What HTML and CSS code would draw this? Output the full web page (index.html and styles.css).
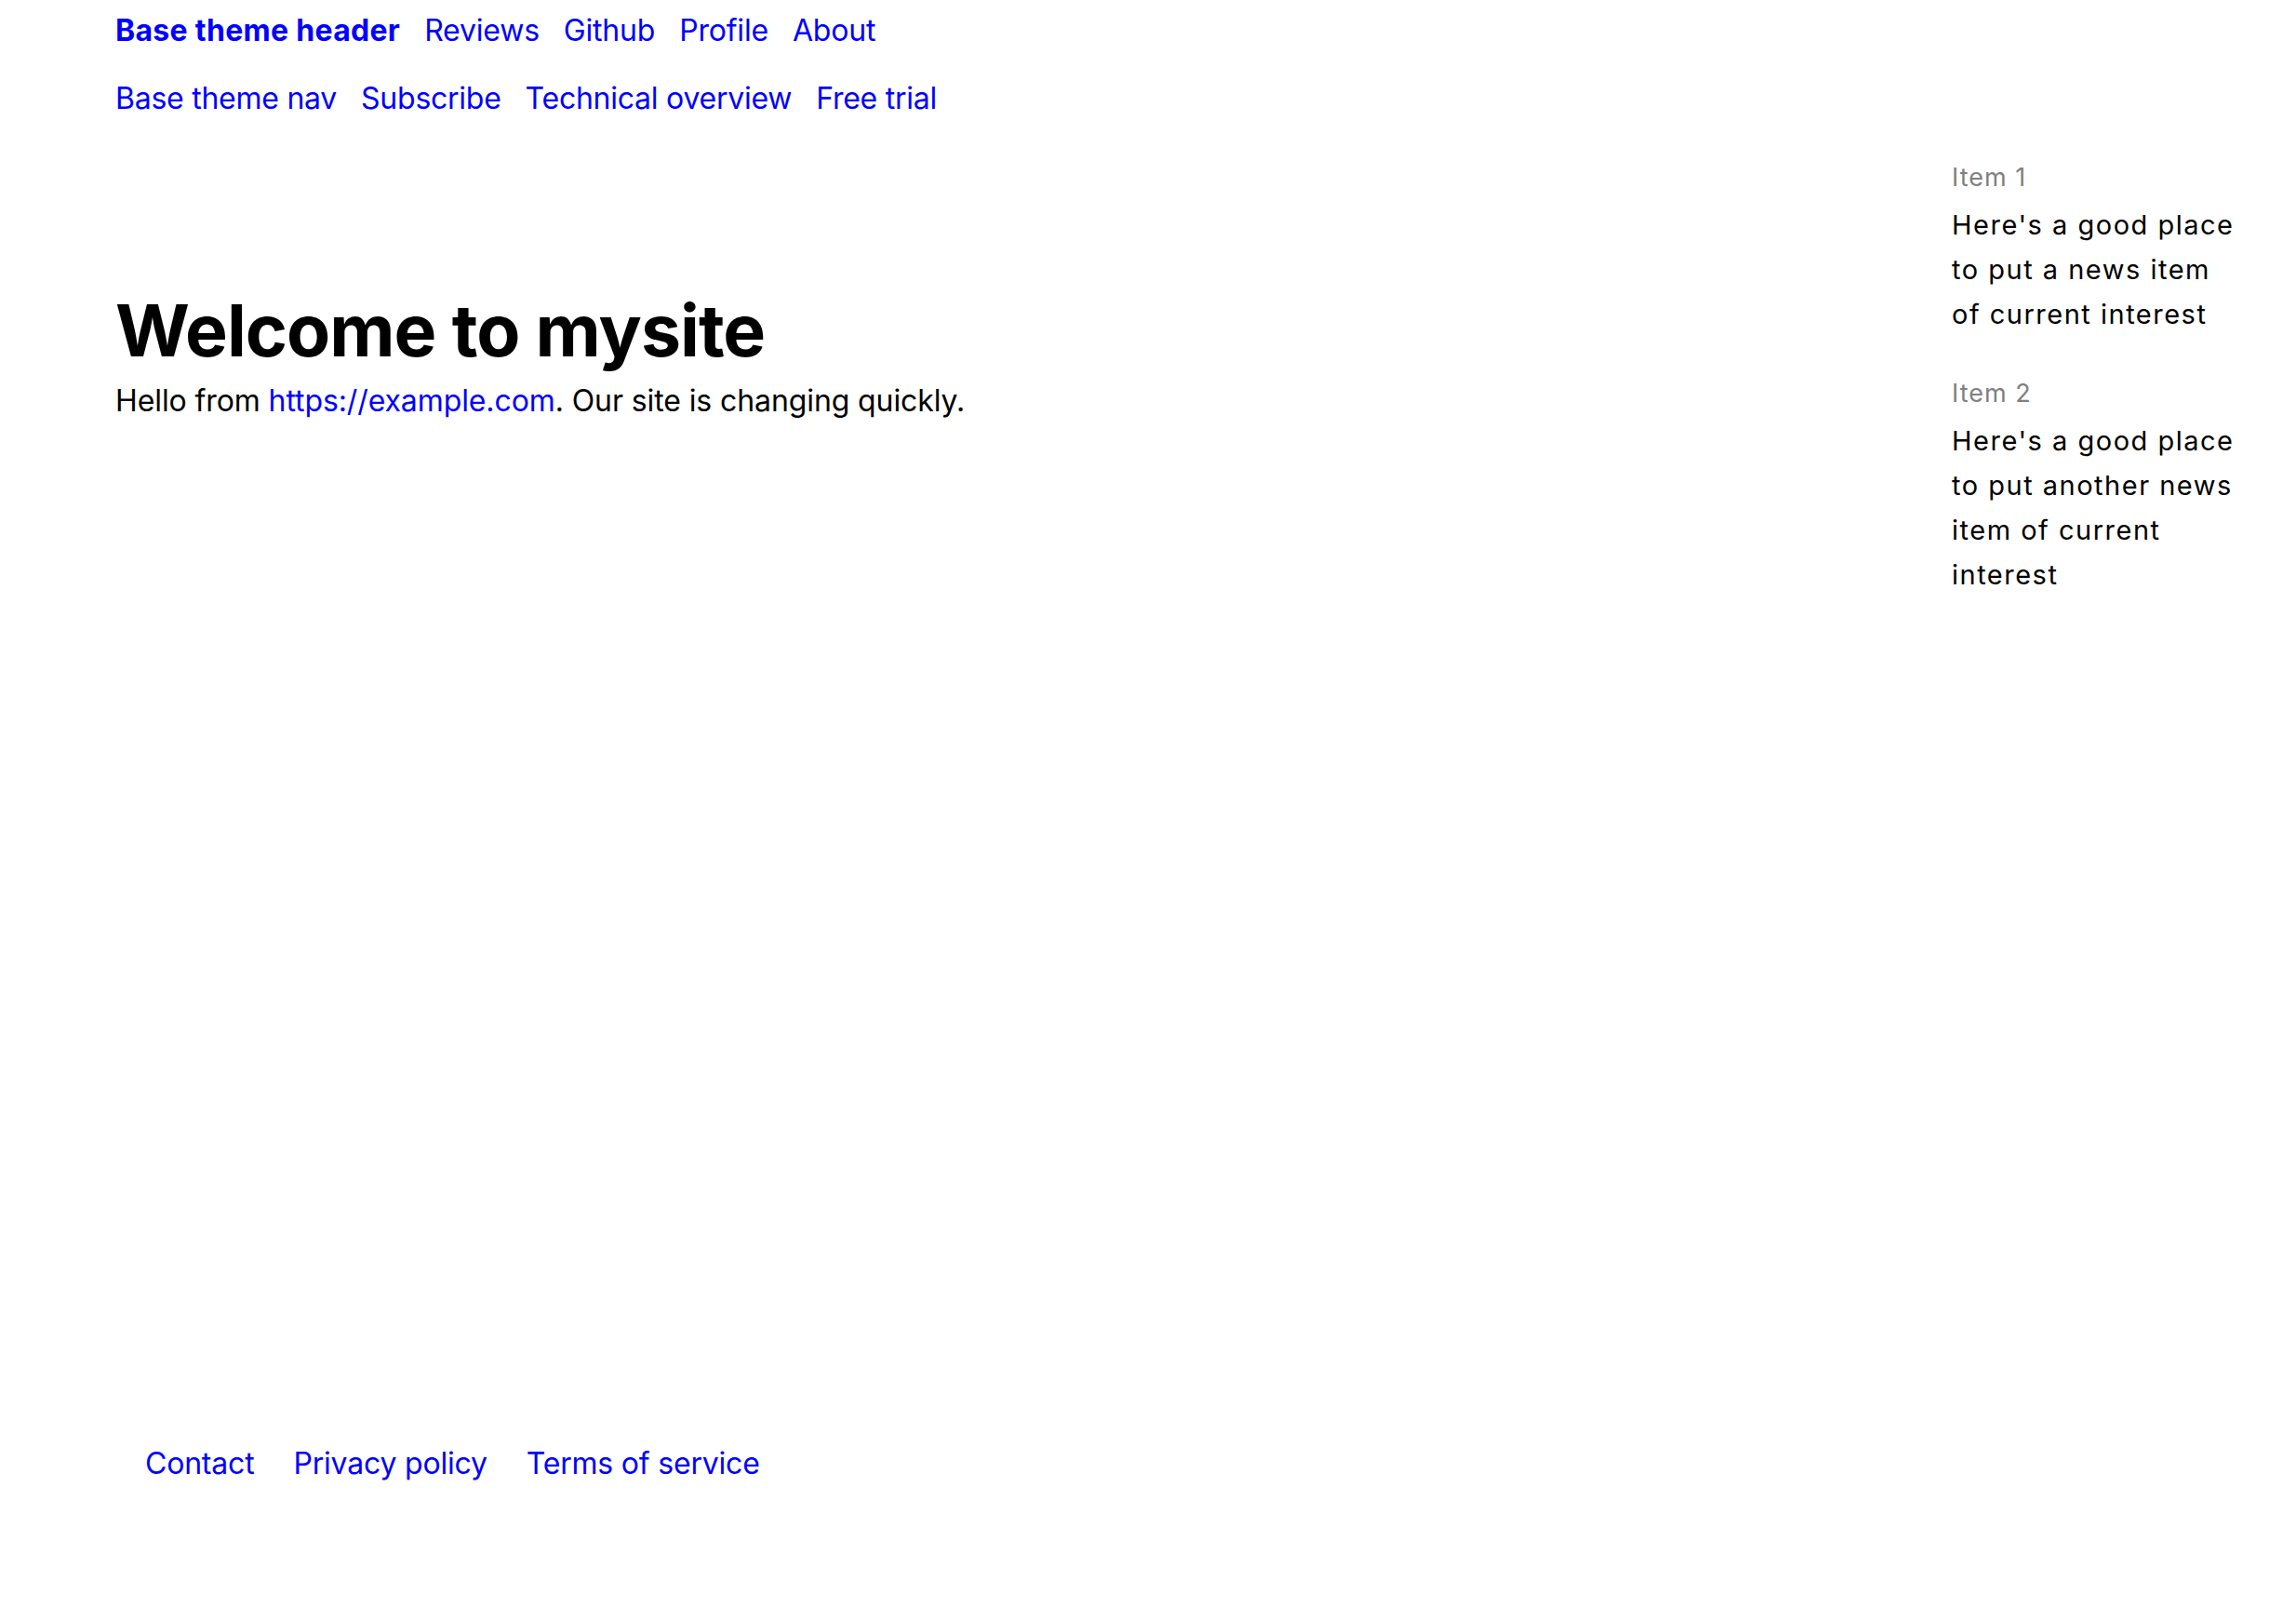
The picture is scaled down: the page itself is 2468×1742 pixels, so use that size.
FILE: index.html
```html
<!DOCTYPE html>
<html lang="en">
<head>
<meta charset="utf-8">
<title>mysite</title>
<link rel="stylesheet" href="styles.css">
</head>
<body>
<div class="page">
  <header class="site-header">
    <a class="brand" href="#">Base theme header</a>
    <a href="#">Reviews</a>
    <a href="#">Github</a>
    <a href="#">Profile</a>
    <a href="#">About</a>
  </header>
  <nav class="site-nav">
    <a href="#">Base theme nav</a>
    <a href="#">Subscribe</a>
    <a href="#">Technical overview</a>
    <a href="#">Free trial</a>
  </nav>
  <div class="layout">
    <main class="content">
      <h1>Welcome to mysite</h1>
      <p>Hello from <a href="#">https://example.com</a>. Our site is changing quickly.</p>
    </main>
    <aside class="sidebar">
      <div class="news">
        <div class="news-label">Item 1</div>
        <p>Here's a good place to put a news item of current interest</p>
      </div>
      <div class="news">
        <div class="news-label">Item 2</div>
        <p>Here's a good place to put another news item of current interest</p>
      </div>
    </aside>
  </div>
  <footer class="site-footer">
    <a href="#">Contact</a>
    <a href="#">Privacy policy</a>
    <a href="#">Terms of service</a>
  </footer>
</div>
</body>
</html>
```

FILE: styles.css
```css
html, body {
  margin: 0;
  padding: 0;
  background: #ffffff;
}

body {
  font-family: Inter, "Liberation Sans", sans-serif;
  color: #000000;
}

a {
  color: #0000ff;
  text-decoration: none;
}

.page {
  padding: 0 64px 0 124px;
}

.site-header,
.site-nav {
  display: flex;
  gap: 26px;
  font-size: 32px;
  line-height: 36px;
  letter-spacing: -0.2px;
}

.site-header {
  padding-top: 15px;
}

.brand {
  font-weight: 700;
  letter-spacing: 0.3px;
}

.site-nav {
  margin-top: 37px;
  letter-spacing: -0.25px;
}

.layout {
  display: grid;
  grid-template-columns: 1fr 306px;
  padding-top: 43px;
  min-height: 1431px;
  box-sizing: border-box;
}

.content h1 {
  margin: 141px 0 0 0;
  font-size: 77px;
  line-height: 94px;
  font-weight: 700;
  letter-spacing: -1px;
}

.content p {
  margin: 11px 0 0 0;
  font-size: 32px;
  line-height: 36px;
  letter-spacing: -0.1px;
}

.sidebar {
  display: flex;
  flex-direction: column;
  gap: 37px;
  font-size: 29px;
  letter-spacing: 1.5px;
}

.news-label {
  color: #808080;
  font-size: 27px;
  letter-spacing: 1px;
  line-height: 48px;
}

.news p {
  margin: 3px 0 0 0;
  line-height: 48px;
}

.site-footer {
  display: flex;
  gap: 42px;
  padding-left: 32px;
  font-size: 32px;
  line-height: 36px;
  letter-spacing: -0.2px;
  padding-bottom: 153px;
}
```
